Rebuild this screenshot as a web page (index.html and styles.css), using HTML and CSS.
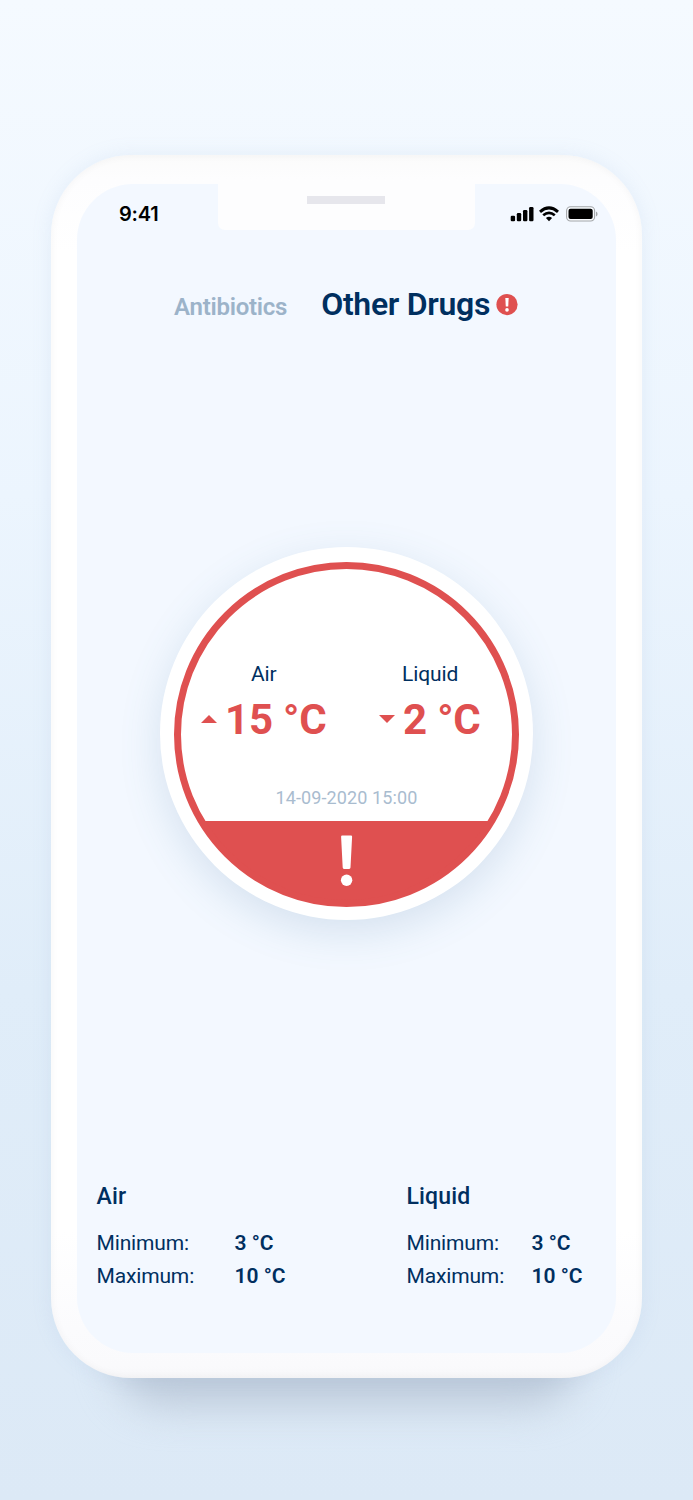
FILE: index.html
```
<!DOCTYPE html>
<html lang="en">
<head>
  <meta charset="UTF-8">
  <title>Other Drugs</title>
  <link rel="stylesheet" href="styles.css">
</head>
<body>
  <div class="phone">
    <div class="screen">
      <header class="status">
        <div class="time">9:41</div>
        <div class="notch"><span class="speaker"></span></div>
        <div class="status-icons">
          <svg width="24" height="16" viewBox="0 0 24 16">
            <rect x="-0.3" y="9.8" width="4.4" height="5.5" rx="1.2"/>
            <rect x="5.8" y="7" width="4.4" height="8.3" rx="1.2"/>
            <rect x="12" y="4" width="4.4" height="11.3" rx="1.2"/>
            <rect x="18.1" y="1" width="4.4" height="14.3" rx="1.2"/>
          </svg>
          <svg class="wifi" width="20" height="16" viewBox="0 0 20 16">
            <path d="M1 5.8 Q10 -2 19 5.8" fill="none" stroke="#000" stroke-width="3"/>
            <path d="M4.2 9.3 Q10 4.4 15.8 9.3" fill="none" stroke="#000" stroke-width="2.7"/>
            <path d="M6.9 11.9 Q10 9.6 13.1 11.9 L10 15.2 Z"/>
          </svg>
          <svg class="battery" width="32" height="16" viewBox="0 0 32 16">
            <rect x="0.6" y="0.8" width="28" height="14.2" rx="4" fill="#fff" fill-opacity=".5" stroke="#a3a6a9" stroke-width="1.1"/>
            <rect x="2.5" y="2.7" width="24.2" height="10.2" rx="2"/>
            <path d="M30 5.4 Q31.6 6.2 31.6 7.9 Q31.6 9.6 30 10.4 Z" fill="#a3a6a9"/>
          </svg>
        </div>
      </header>

      <nav class="tabs">
        <a class="tab">Antibiotics</a>
        <a class="tab active">Other Drugs</a>
        <svg class="badge" width="22" height="22" viewBox="0 0 22 22">
          <circle cx="11" cy="10.6" r="10.6" fill="#df5050"/>
          <path d="M9.3 3.9 H12.7 L12.2 12.6 H9.8 Z" fill="#fff"/>
          <circle cx="11" cy="15.9" r="1.8" fill="#fff"/>
        </svg>
      </nav>

      <main class="dial">
        <div class="ring">
          <div class="readings">
            <div class="reading air">
              <div class="label">Air</div>
              <div class="value"><i class="up"></i>15 °C</div>
            </div>
            <div class="reading liquid">
              <div class="label">Liquid</div>
              <div class="value"><i class="down"></i>2 °C</div>
            </div>
          </div>
          <div class="date">14-09-2020 15:00</div>
          <div class="alert">
            <svg width="14" height="52" viewBox="0 0 14 52">
              <path d="M2.2 0.6 H11 Q12.2 0.6 12.1 1.8 L10.5 32.6 Q10.4 33.9 9.2 33.9 H4 Q2.8 33.9 2.7 32.6 L1.1 1.8 Q1 0.6 2.2 0.6 Z" fill="#fff"/>
              <circle cx="6.6" cy="45.3" r="5.7" fill="#fff"/>
            </svg>
          </div>
        </div>
      </main>

      <footer class="limits">
        <section class="limit air">
          <h2>Air</h2>
          <dl>
            <dt>Minimum:</dt><dd>3 °C</dd>
            <dt>Maximum:</dt><dd>10 °C</dd>
          </dl>
        </section>
        <section class="limit liquid">
          <h2>Liquid</h2>
          <dl>
            <dt>Minimum:</dt><dd>3 °C</dd>
            <dt>Maximum:</dt><dd>10 °C</dd>
          </dl>
        </section>
      </footer>
    </div>
  </div>
</body>
</html>
```
FILE: styles.css
```
* {
  box-sizing: border-box;
  margin: 0;
}

body {
  height: 1500px;
  padding: 155px 51px 0;
  background: linear-gradient(#f5faff, #ecf5fe 33%, #e0edf9 66%, #dce9f6);
  color: #002f5f;
  font-family: Roboto, sans-serif;
  overflow: hidden;
}

.phone {
  position: relative;
  width: 591px;
  height: 1223px;
  padding: 29px 26px 25px;
  border-radius: 80px;
  background: linear-gradient(#fbfbfb, #fdfdfe 2%, #fff 8%, #fff 88%, #fbfbfd 96%, #fafafc 99%, #f7f7f9);
  box-shadow: 0 0 20px rgba(130, 165, 205, 0.13), inset 0 0 9px rgba(0, 0, 0, 0.045);
}

/* shadow under the device */
.phone::before {
  content: "";
  position: absolute;
  z-index: -1;
  left: 64px;
  right: 64px;
  bottom: -28px;
  height: 100px;
  border-radius: 50px;
  background: #bdcada;
  filter: blur(19px);
}

.screen {
  display: flex;
  flex-direction: column;
  height: 1169px;
  border-radius: 56px;
  background: #f3f8ff;
  overflow: hidden;
}

.status {
  display: grid;
  grid-template-columns: 141px 257px 141px;
  height: 46px;
}

.time {
  padding: 18px 0 0 42px;
  color: #000;
  font: 600 20px/24px Inter, sans-serif;
  letter-spacing: -0.2px;
}

.notch {
  padding-top: 12px;
  border-radius: 0 0 7px 7px;
  background: #fdfdfe;
}

.speaker {
  display: block;
  width: 78px;
  height: 8px;
  margin-left: 89px;
  background: #e6e6ec;
}

.status-icons {
  display: flex;
  padding: 22px 0 0 36px;
}

.status-icons svg {
  flex: none;
  overflow: visible;
}

.wifi {
  margin-left: 4px;
}

.battery {
  margin-left: 7px;
}

.tabs {
  display: flex;
  align-items: baseline;
  padding: 55px 0 0 97px;
  height: 120px;
}

.tab {
  color: #9cb3c9;
  font-size: 24px;
  font-weight: 600;
  letter-spacing: -0.25px;
}

.tab.active {
  margin-left: 34px;
  color: #002f5f;
  font-size: 32px;
  letter-spacing: -0.3px;
}

.badge {
  align-self: flex-start;
  margin: 9px 0 0 6px;
}

.dial {
  flex: none;
  width: 373px;
  height: 373px;
  margin: 197px auto 0;
  padding-top: 15px;
  border-radius: 50%;
  background: #fff;
  box-shadow: 0 12px 40px rgba(80, 125, 165, 0.18);
}

.ring {
  display: flex;
  flex-direction: column;
  width: 345px;
  height: 345px;
  margin: 0 auto;
  border: 7px solid #df5050;
  border-radius: 50%;
  background: linear-gradient(#fff 259px, #df5050 259px) border-box;
}

.readings {
  display: flex;
  padding: 92px 0 0 20px;
}

.reading {
  width: 178px;
  flex: none;
}

.label {
  padding-left: 50px;
  font-size: 21px;
  letter-spacing: -0.1px;
  line-height: 26px;
}

.liquid .label {
  padding-left: 23px;
}

.value {
  display: flex;
  align-items: center;
  margin-top: 8px;
  color: #df5050;
  font-size: 42px;
  font-weight: 700;
  letter-spacing: -0.2px;
  line-height: 50px;
  white-space: nowrap;
}

.up,
.down {
  width: 16px;
  height: 8px;
  margin: -2px 8px 0 0;
  background: #df5050;
  clip-path: polygon(50% 0, 100% 100%, 0 100%);
}

.down {
  clip-path: polygon(0 0, 100% 0, 50% 100%);
}

.date {
  margin-top: 41px;
  color: #a9bccf;
  font-size: 18px;
  letter-spacing: 0.1px;
  line-height: 24px;
  text-align: center;
}

.alert {
  margin-top: 25px;
  text-align: center;
}

.limits {
  display: flex;
  padding: 263px 0 0 19.5px;
}

.limit {
  width: 310px;
  flex: none;
}

.limit h2 {
  font-size: 23px;
  font-weight: 500;
  letter-spacing: 0.15px;
  line-height: 28px;
}

.limit dl {
  display: grid;
  grid-template-columns: 138px auto;
  margin-top: 16px;
  font-size: 21px;
  line-height: 33px;
}

.limit.liquid dl {
  grid-template-columns: 125px auto;
}

.limit dt {
  letter-spacing: -0.15px;
}

.limit dd {
  font-weight: 600;
}
```
